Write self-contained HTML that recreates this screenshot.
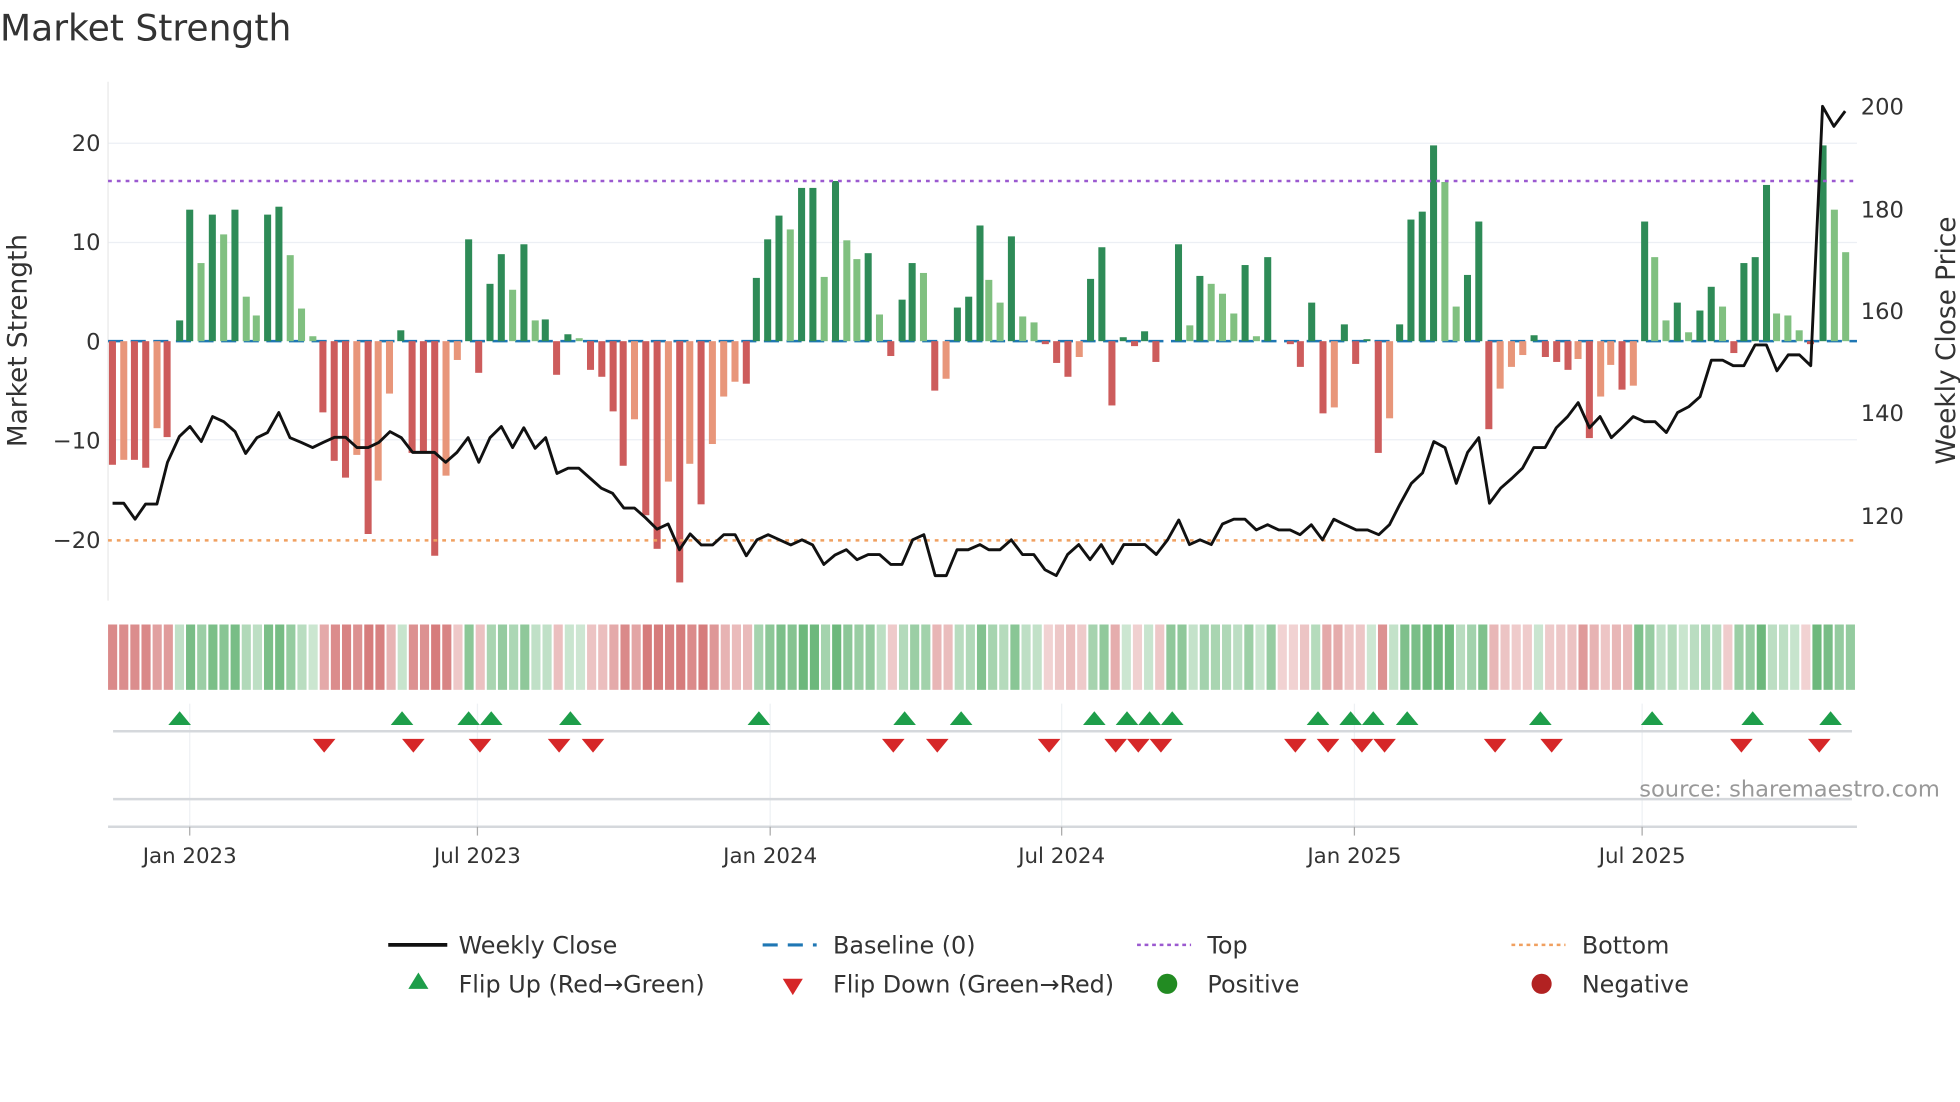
<!DOCTYPE html>
<html><head><meta charset="utf-8">
<style>
html,body{margin:0;padding:0;background:#fff;}
svg{display:block;font-family:"DejaVu Sans","Liberation Sans",sans-serif;}
</style></head>
<body>
<svg id="s" width="1960" height="1102" viewBox="0 0 1560 877" xmlns="http://www.w3.org/2000/svg">
<rect width="1560" height="877" fill="#fff"/>
<text x="0" y="32" font-size="28.7" fill="#333">Market Strength</text>
<g stroke="#eceff4" stroke-width="1">
<line x1="86" x2="1478" y1="114" y2="114"/><line x1="86" x2="1478" y1="193" y2="193"/>
<line x1="86" x2="1478" y1="350" y2="350"/>
</g>
<line x1="86" x2="86" y1="65" y2="478" stroke="#e8e8e8"/>
<g font-size="18" fill="#333" text-anchor="end">
<text x="80" y="120">20</text><text x="80" y="199">10</text><text x="80" y="278">0</text>
<text x="80" y="357">−10</text><text x="80" y="436">−20</text>
</g>
<g font-size="18" fill="#333">
<text x="1481" y="91">200</text><text x="1481" y="173">180</text><text x="1481" y="254">160</text>
<text x="1481" y="335">140</text><text x="1481" y="417">120</text>
</g>
<text transform="translate(21,271) rotate(-90)" font-size="21" fill="#333" text-anchor="middle">Market Strength</text>
<text transform="translate(1556,271) rotate(-90)" font-size="21" fill="#333" text-anchor="middle">Weekly Close Price</text>
<line x1="86" x2="1478" y1="271.5" y2="271.5" stroke="#1f77b4" stroke-width="2" stroke-dasharray="12 6"/>
<g id="bars"></g>
<line x1="86" x2="1478" y1="144" y2="144" stroke="#9b59d0" stroke-width="2" stroke-dasharray="3 4"/>
<line x1="86" x2="1478" y1="430" y2="430" stroke="#f0a060" stroke-width="2" stroke-dasharray="3 4"/>
<polyline id="price" fill="none" stroke="#111" stroke-width="2.3" stroke-linejoin="round"/>
<g id="heat"></g>
<g stroke="#eef1f4" stroke-width="1">
<line x1="151" x2="151" y1="560" y2="658"/><line x1="380" x2="380" y1="560" y2="658"/>
<line x1="613" x2="613" y1="560" y2="658"/><line x1="845" x2="845" y1="560" y2="658"/>
<line x1="1078" x2="1078" y1="560" y2="658"/><line x1="1307" x2="1307" y1="560" y2="658"/>
</g>
<line x1="90" x2="1474" y1="582" y2="582" stroke="#d5d8dc" stroke-width="2"/>
<line x1="90" x2="1474" y1="636" y2="636" stroke="#d5d8dc" stroke-width="2"/>
<line x1="86" x2="1478" y1="658" y2="658" stroke="#d5d8dc" stroke-width="2"/>
<g id="flips"></g>
<text x="1544" y="634" font-size="18" fill="#999" text-anchor="end">source: sharemaestro.com</text>
<g stroke="#aaa" stroke-width="1">
<line x1="151" x2="151" y1="658" y2="665"/><line x1="380" x2="380" y1="658" y2="665"/>
<line x1="613" x2="613" y1="658" y2="665"/><line x1="845" x2="845" y1="658" y2="665"/>
<line x1="1078" x2="1078" y1="658" y2="665"/><line x1="1307" x2="1307" y1="658" y2="665"/>
</g>
<g font-size="17" fill="#333" text-anchor="middle">
<text x="151" y="687">Jan 2023</text><text x="380" y="687">Jul 2023</text><text x="613" y="687">Jan 2024</text>
<text x="845" y="687">Jul 2024</text><text x="1078" y="687">Jan 2025</text><text x="1307" y="687">Jul 2025</text>
</g>
<g font-size="19" fill="#333">
<line x1="309" x2="356" y1="752" y2="752" stroke="#111" stroke-width="3"/>
<text x="365" y="759">Weekly Close</text>
<line x1="607" x2="650" y1="752" y2="752" stroke="#1f77b4" stroke-width="2.5" stroke-dasharray="12 8"/>
<text x="663" y="759">Baseline (0)</text>
<line x1="905" x2="948" y1="752" y2="752" stroke="#9b59d0" stroke-width="2" stroke-dasharray="3 3"/>
<text x="961" y="759">Top</text>
<line x1="1203" x2="1246" y1="752" y2="752" stroke="#f0a060" stroke-width="2" stroke-dasharray="3 3"/>
<text x="1259" y="759">Bottom</text>
<polygon points="333,774 341,787 325,787" fill="#1e9e4a"/>
<text x="365" y="790">Flip Up (Red→Green)</text>
<polygon points="623,779 639,779 631,792" fill="#d62728"/>
<text x="663" y="790">Flip Down (Green→Red)</text>
<circle cx="929" cy="783" r="8" fill="#228b22"/>
<text x="961" y="790">Positive</text>
<circle cx="1227" cy="783" r="8" fill="#b22222"/>
<text x="1259" y="790">Negative</text>
</g>
</svg>
<script>
var NS="http://www.w3.org/2000/svg";
function el(t,a,p){var e=document.createElementNS(NS,t);for(var k in a)e.setAttribute(k,a[k]);p.appendChild(e);return e;}
var B=[[89.5,-12.5,1],[98.5,-12,0],[107,-12,1],[116,-12.8,1],[125,-8.8,0],[133,-9.7,1],[143,2.1,1],[151,13.3,1],[160,7.9,0],[169,12.8,1],[178,10.8,0],[187,13.3,1],[196,4.5,0],[204,2.6,0],[213,12.8,1],[222,13.6,1],[231,8.7,0],[240,3.3,0],[249,0.5,0],
[257,-7.2,1],[266,-12.1,1],[275,-13.8,1],[284,-11.5,0],[293,-19.5,1],[301,-14.1,0],[310,-5.3,0],[319,1.1,1],[328,-11.3,1],[337,-11.3,1],[346,-21.7,1],[355,-13.6,0],[364,-1.9,0],[373,10.3,1],[381,-3.2,1],[390,5.8,1],[399,8.8,1],[408,5.2,0],[417,9.8,1],[426,2.1,0],[434,2.2,1],[443,-3.4,1],[452,0.7,1],[461,0.3,0],[470,-2.9,1],[479,-3.6,1],[488,-7.1,1],[496,-12.6,1],[505,-7.9,0],[514,-17.6,1],[523,-21,1],[532,-14.2,0],[541,-24.4,1],[549,-12.4,0],[558,-16.5,1],[567,-10.4,0],[576,-5.6,0],[585,-4.1,0],[594,-4.3,1],[602,6.4,1],[611,10.3,1],[620,12.7,1],[629,11.3,0],[638,15.5,1],[647,15.5,1],[656,6.5,0],[665,16.2,1],[674,10.2,0],[682,8.3,0],[691,8.9,1],[700,2.7,0],[709,-1.5,1],[718,4.2,1],[726,7.9,1],[735,6.9,0],[744,-5,1],[753,-3.8,0],[762,3.4,1],[771,4.5,1],[780,11.7,1],
[787,6.2,0],[796,3.9,0],[805,10.6,1],[814,2.5,0],[823,1.9,0],[832,-0.3,1],[841,-2.2,1],[850,-3.6,1],[859,-1.6,0],[868,6.3,1],[877,9.5,1],[885,-6.5,1],[894,0.4,1],[903,-0.5,1],[911,1.0,1],[920,-2.1,1],[938,9.8,1],[947,1.6,0],[955,6.6,1],[964,5.8,0],[973,4.8,0],[982,2.8,0],[991,7.7,1],[1000,0.5,0],[1009,8.5,1],[1027,-0.3,1],[1035,-2.6,1],[1044,3.9,1],[1053,-7.3,1],[1062,-6.7,0],[1070,1.7,1],[1079,-2.3,1],[1088,0.2,1],[1097,-11.3,1],[1106,-7.8,0],[1114,1.7,1],[1123,12.3,1],[1132,13.1,1],[1141,19.8,1],[1150,16.1,0],[1159,3.5,0],[1168,6.7,1],[1177,12.1,1],[1185,-8.9,1],[1194,-4.8,0],[1203,-2.6,0],[1212,-1.4,0],[1221,0.6,1],[1230,-1.6,1],[1239,-2.1,1],[1248,-2.9,1],[1256,-1.8,0],[1265,-9.8,1],[1274,-5.6,0],[1282,-2.4,0],[1291,-4.9,1],[1300,-4.5,0],[1309,12.1,1],[1317,8.5,0],[1326,2.1,0],[1335,3.9,1],[1344,0.9,0],[1353,3.1,1],[1362,5.5,1],[1371,3.5,0],[1380,-1.2,1],[1388,7.9,1],[1397,8.5,1],[1406,15.8,1],[1414,2.8,0],[1423,2.6,0],[1432,1.1,0],[1441,-0.3,1],[1451,19.8,1],[1460,13.3,0],[1469,9.0,0]];
var bars=document.getElementById('bars'),heat=document.getElementById('heat');
var Z=271.5,U=7.87;
B.forEach(function(b){
 var v=b[1],h=Math.abs(v)*U,y=v>0?Z-h:Z;
 var c=v>0?(b[2]?'#2e8b57':'#80c080'):(b[2]?'#cd5c5c':'#e8967a');
 el('rect',{x:b[0]-2.8,y:y,width:5.6,height:Math.max(h,1.5),fill:c},bars);
});
var N=157,w=(1478-86)/N;
for(var i=0;i<N;i++){
 var cx=86+i*w+w/2,best=null,bd=1e9;
 B.forEach(function(b){var d=Math.abs(b[0]-cx);if(d<bd){bd=d;best=b;}});
 var v=best?best[1]:0,col;
 if(v>=0){col='rgba(60,160,80,'+(0.25+0.5*Math.min(1,v/15))+')';}
 else{col='rgba(200,80,80,'+(0.25+0.5*Math.min(1,-v/15))+')';}
 el('rect',{x:86+i*w,y:497,width:w-1.6,height:52,fill:col},heat);
}
var P1=[[180,1268],[198,1268],[216,1308],[233,1270],[251,1270],[268,1165],[287,1100],[304,1075],[322,1113],[340,1050],[358,1063],[376,1088],[393,1143],[411,1103],[428,1090],[446,1040],[464,1103],[482,1115],[500,1128],[517,1115],[535,1102],[553,1102],[571,1128],[589,1128],[606,1115],[624,1088],[642,1103],[660,1140],[678,1140],[695,1140],[713,1165],[731,1140],[749,1103],[766,1165],[784,1103],[802,1075],[820,1128],[838,1078],[856,1130],[873,1103],[891,1193],[909,1180],[926,1180],[944,1205],[962,1230],[980,1243],[998,1280],[1015,1280],[1033,1305],[1051,1333],[1069,1320],[1087,1385],[1104,1345],[1122,1373],[1140,1373],[1158,1347],[1176,1347],[1194,1400],[1211,1360],[1229,1347],[1247,1360],[1265,1373],[1283,1360],[1300,1373],[1318,1422],[1336,1398],[1354,1385],[1371,1410],[1389,1397],[1407,1397],[1425,1422],[1443,1422],[1460,1360],[1478,1347],[1496,1450],[1514,1450],[1531,1385],[1549,1385]];
var P2=[[0,1372],[14,1385],[32,1385],[50,1360],[68,1397],[86,1397],[104,1435],[122,1450],[140,1397],[158,1372],[176,1410],[194,1372],[212,1420],[230,1372],[247,1372],[264,1372],[282,1397],[300,1360],[318,1310],[335,1372],[352,1360],[370,1372],[388,1320],[406,1308],[424,1308],[442,1335],[460,1322],[478,1335],[496,1335],[512,1347],[530,1322],[548,1360],[566,1308],[584,1322],[602,1335],[620,1335],[638,1347],[655,1322],[672,1270],[690,1218],[708,1192],[726,1113],[744,1128],[762,1218],[780,1140],[798,1103],[815,1268],[833,1230],[851,1205],[868,1180],[886,1128],[904,1128],[922,1078],[940,1050],[957,1015],[975,1078],[992,1050],[1010,1103],[1027,1078],[1045,1050],[1063,1063],[1080,1063],[1098,1090],[1116,1040],[1134,1025],[1152,1000],[1170,908],[1188,908],[1205,922],[1222,922],[1240,870],[1258,870],[1275,935],[1293,895],[1311,895],[1329,922],[1348,270],[1366,320],[1384,282]];
function Y(zy){return (84+(zy-268)*0.3165).toFixed(1);}
var pts=[];
P1.forEach(function(p){pts.push((p[0]/2.01).toFixed(1)+','+Y(p[1]));});
P2.forEach(function(p){pts.push((780+p[0]/2.01).toFixed(1)+','+Y(p[1]));});
document.getElementById('price').setAttribute('points',pts.join(' '));
var fl=document.getElementById('flips');
[143,320,373,391,454,604,720,765,871,897,915,933,1049,1075,1093,1120,1226,1315,1395,1457].forEach(function(x){
 el('polygon',{points:x+',566 '+(x+9)+',577 '+(x-9)+',577',fill:'#1e9e4a'},fl);});
[258,329,382,445,472,711,746,835,888,906,924,1031,1057,1084,1102,1190,1235,1386,1448].forEach(function(x){
 el('polygon',{points:(x-9)+',588 '+(x+9)+',588 '+x+',599',fill:'#d62728'},fl);});
</script>
</body></html>
